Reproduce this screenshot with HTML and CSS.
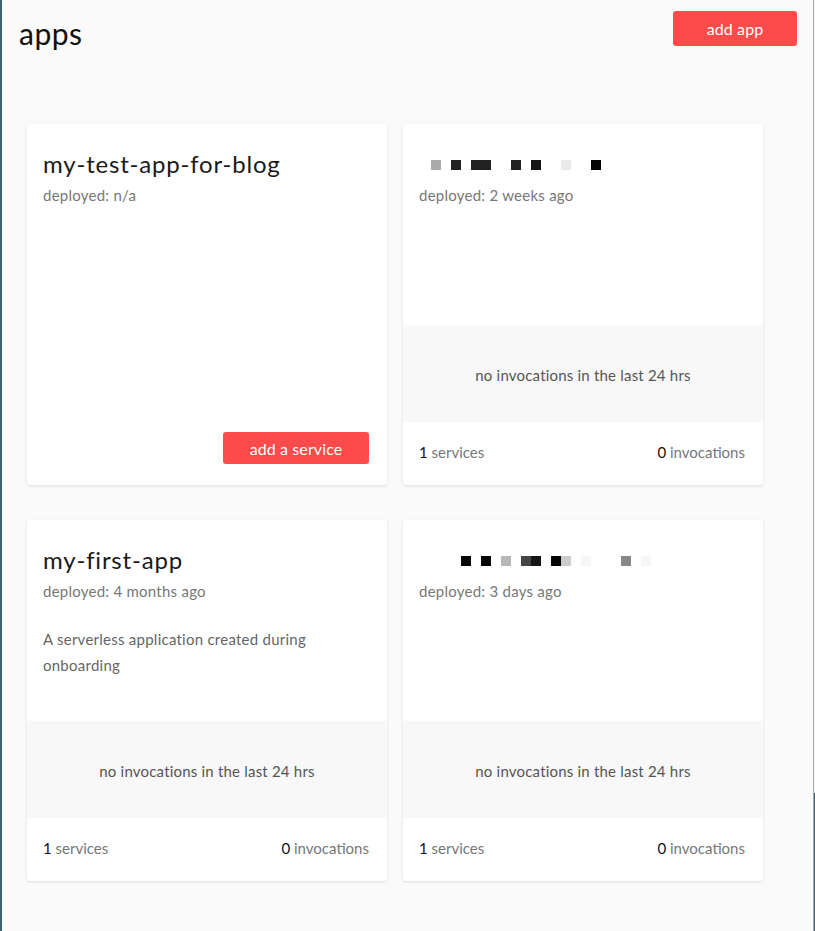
FILE: index.html
```html
<!DOCTYPE html>
<html>
<head>
<meta charset="utf-8">
<link rel="stylesheet" href="styles.css">
</head>
<body>
<div class="stripe"></div>
<main class="window">
  <header class="header">
    <h1 class="page-title">apps</h1>
    <button class="btn btn-add-app">add app</button>
  </header>
  <section class="grid">
    <article class="card">
      <div class="card-body">
        <h2 class="card-title">my-test-app-for-blog</h2>
        <div class="deployed">deployed: n/a</div>
      </div>
      <div class="card-actions">
        <button class="btn btn-service">add a service</button>
      </div>
    </article>
    <article class="card">
      <div class="card-body">
        <div class="pixel-title">
          <span class="px"></span><span class="px g1"></span><span class="px"></span><span class="px d1"></span><span class="px"></span><span class="px d1"></span><span class="px d1"></span><span class="px"></span><span class="px"></span><span class="px d1"></span><span class="px"></span><span class="px d2"></span><span class="px"></span><span class="px"></span><span class="px l1"></span><span class="px"></span><span class="px"></span><span class="px d3"></span>
        </div>
        <div class="deployed">deployed: 2 weeks ago</div>
      </div>
      <div class="stats">no invocations in the last 24 hrs</div>
      <div class="card-footer">
        <span><b>1</b> services</span>
        <span><b>0</b> invocations</span>
      </div>
    </article>
    <article class="card">
      <div class="card-body">
        <h2 class="card-title">my-first-app</h2>
        <div class="deployed">deployed: 4 months ago</div>
        <p class="desc">A serverless application created during onboarding</p>
      </div>
      <div class="stats">no invocations in the last 24 hrs</div>
      <div class="card-footer">
        <span><b>1</b> services</span>
        <span><b>0</b> invocations</span>
      </div>
    </article>
    <article class="card">
      <div class="card-body">
        <div class="pixel-title">
          <span class="px"></span><span class="px"></span><span class="px"></span><span class="px"></span><span class="px d3"></span><span class="px"></span><span class="px d3"></span><span class="px"></span><span class="px g2"></span><span class="px"></span><span class="px d4"></span><span class="px d2"></span><span class="px"></span><span class="px d3"></span><span class="px g3"></span><span class="px"></span><span class="px l2"></span><span class="px"></span><span class="px"></span><span class="px"></span><span class="px g4"></span><span class="px"></span><span class="px l2"></span>
        </div>
        <div class="deployed">deployed: 3 days ago</div>
      </div>
      <div class="stats">no invocations in the last 24 hrs</div>
      <div class="card-footer">
        <span><b>1</b> services</span>
        <span><b>0</b> invocations</span>
      </div>
    </article>
  </section>
</main>
<div class="edge"></div>
</body>
</html>
```

FILE: styles.css
```css
* { box-sizing: border-box; }
html, body { margin: 0; padding: 0; }
body {
  display: flex;
  width: 815px;
  height: 931px;
  overflow: hidden;
  background: #3f5f73;
  font-family: Lato, "Noto Sans", sans-serif;
  color: #1f1f1f;
}
.stripe { width: 2px; flex: none; background: #3f5f73; }
.window {
  width: 811px;
  flex: none;
  height: 931px;
  background: #fafafa;
}
.edge {
  width: 2px;
  flex: none;
  border-left: 1px solid #a9a9a9;
  background: linear-gradient(#f2f2f2 0, #f2f2f2 793px, #3f5f73 793px);
}
.header {
  display: flex;
  justify-content: space-between;
  align-items: flex-start;
  padding: 11px 16px 0 17px;
  height: 46px;
}
.page-title {
  margin: 0;
  font-size: 30px;
  font-weight: 400;
  letter-spacing: 0.5px;
  line-height: 44px;
  color: #111;
}
.btn {
  border: 0;
  border-radius: 3px;
  background: #fd4a4a;
  color: #fff;
  font-family: Lato, "Noto Sans", sans-serif;
  font-size: 16px;
  letter-spacing: 0.1px;
  cursor: pointer;
}
.btn-add-app {
  width: 124px;
  height: 35px;
}
.grid {
  display: grid;
  grid-template-columns: 360px 360px;
  column-gap: 16px;
  row-gap: 35px;
  margin: 78px 0 0 25px;
}
.card {
  height: 361px;
  background: #fff;
  border-radius: 3px;
  box-shadow: 0 1px 3px rgba(0,0,0,0.13);
  display: flex;
  flex-direction: column;
}
.card-body {
  flex: 1;
  padding: 24px 16px 0 16px;
}
.card-title {
  margin: 0;
  font-size: 24px;
  font-weight: 400;
  letter-spacing: 0.8px;
  line-height: 32px;
  color: #1a1a1a;
}
.pixel-title {
  height: 32px;
  display: flex;
  align-items: flex-end;
  padding-bottom: 10px;
  padding-left: 2px;
}
.px { width: 10px; height: 10px; flex: none; }
.g1 { background: #ababab; }
.g2 { background: #b8b8b8; }
.g3 { background: #cccccc; }
.g4 { background: #888888; }
.d1 { background: #222222; }
.d2 { background: #151515; }
.d3 { background: #050505; }
.d4 { background: #454545; }
.l1 { background: #eaeaea; }
.l2 { background: #f6f6f6; }
.deployed {
  margin-top: 5px;
  font-size: 15px;
  letter-spacing: 0.25px;
  line-height: 20px;
  color: #777;
}
.desc {
  margin: 25px 0 0 0;
  font-size: 15px;
  letter-spacing: 0.25px;
  line-height: 26px;
  color: #666;
  width: 290px;
}
.card-actions {
  display: flex;
  justify-content: flex-end;
  padding: 0 18px 21px 0;
}
.btn-service {
  width: 146px;
  height: 32px;
}
.stats {
  height: 97px;
  flex: none;
  background: #f8f8f8;
  display: flex;
  align-items: center;
  justify-content: center;
  padding-top: 2px;
  font-size: 15px;
  letter-spacing: 0.2px;
  color: #555;
}
.card-footer {
  height: 63px;
  flex: none;
  display: flex;
  align-items: center;
  justify-content: space-between;
  padding: 0 18px 4px 16px;
  font-size: 15px;
  letter-spacing: 0;
  color: #777;
}
.card-footer b {
  font-weight: 400;
  color: #111;
}
```
